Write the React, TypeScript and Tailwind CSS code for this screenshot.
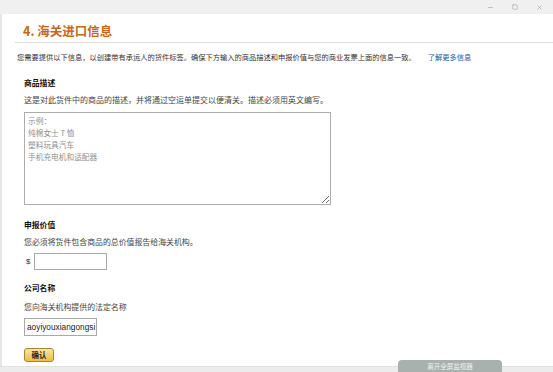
import React from "react";
import { Minus, Square, X } from "lucide-react";

const cjk = "font-['Microsoft_YaHei','Noto_Sans_CJK_SC',sans-serif]";

export default function App() {
  return (
    <div className={`relative w-[553px] h-[372px] overflow-hidden bg-white flex flex-col ${cjk}`}>
      {/* title bar */}
      <div className="h-[14px] bg-[#f0f0f0] flex items-center justify-end pr-[10px] gap-[18px] text-[#666]">
        <Minus size={7} strokeWidth={1.2} />
        <Square size={6} strokeWidth={1.2} />
        <X size={7} strokeWidth={1.2} />
      </div>

      <div className="flex-1 flex flex-col border-l-2 border-[#e6e6e6]">
        <div className="ml-[13px] border-b border-[#dedede] pb-[4px] pt-[10px] pl-[8px]">
          <h1 className="text-[12.5px] leading-[14px] font-bold text-[#c8661a]">4. 海关进口信息</h1>
        </div>

        <p className="mt-[8px] ml-[15px] text-[7.25px] leading-[12px] text-[#333]">
          您需要提供以下信息，以创建带有承运人的货件标签。确保下方输入的商品描述和申报价值与您的商业发票上面的信息一致。
          <span className="ml-[12px] text-[#1a5a9e]">了解更多信息</span>
        </p>

        <div className="ml-[22px] flex flex-col items-start">
          <h2 className="mt-[14px] text-[7.8px] leading-[12px] font-bold text-[#111]">商品描述</h2>
          <p className="mt-[5px] text-[8px] leading-[12px] text-[#444]">
            这是对此货件中的商品的描述，并将通过空运单提交以便清关。描述必须用英文编写。
          </p>
          <textarea
            readOnly
            className="mt-[6px] w-[307px] h-[93px] border border-[#adadad] px-[3px] py-[2px] text-[7.7px] leading-[12px] text-[#333] placeholder:text-[#8f8f8f] outline-none"
            placeholder={"示例：\n纯棉女士 T 恤\n塑料玩具汽车\n手机充电机和适配器"}
          />

          <h2 className="mt-[14px] text-[7.8px] leading-[12px] font-bold text-[#111]">申报价值</h2>
          <p className="mt-[5px] text-[7.9px] leading-[12px] text-[#444]">
            您必须将货件包含商品的总价值报告给海关机构。
          </p>
          <div className="mt-[5px] flex items-center gap-[4px]">
            <span className="text-[8px] text-[#333] ml-[2px] font-['Liberation_Sans',sans-serif]">$</span>
            <div className="w-[73px] h-[17px] border border-[#a9a9a9] bg-white" />
          </div>

          <h2 className="mt-[12px] text-[7.8px] leading-[12px] font-bold text-[#111]">公司名称</h2>
          <p className="mt-[7px] text-[7.9px] leading-[12px] text-[#444]">
            您向海关机构提供的法定名称
          </p>
          <div className="mt-[5px] w-[73px] h-[18px] border border-[#a9a9a9] bg-white flex items-center pl-[2px]">
            <span className="whitespace-nowrap text-[8.3px] text-[#222] font-['Liberation_Sans',sans-serif]">
              aoyiyouxiangongsi
            </span>
          </div>

          <button className="mt-[12px] w-[30px] h-[14px] rounded-[3px] border border-[#a88734] bg-gradient-to-b from-[#f7e3a6] to-[#eebd3f] text-[7.5px] leading-[12px] font-bold text-[#222] flex items-center justify-center">
            确认
          </button>
        </div>
      </div>

      <div className="h-[6px] bg-[#ececec] border-t border-[#e0e0e0]" />

      {/* floating overlay pill */}
      <div className="absolute left-[398px] top-[360px] w-[104px] h-[14px] rounded-t-[4px] bg-[#a9b1ae] flex items-start justify-center pt-[1px]">
        <span className="text-[6.5px] leading-[10px] text-[#eef1ef]">离开全屏监视器</span>
      </div>
    </div>
  );
}
